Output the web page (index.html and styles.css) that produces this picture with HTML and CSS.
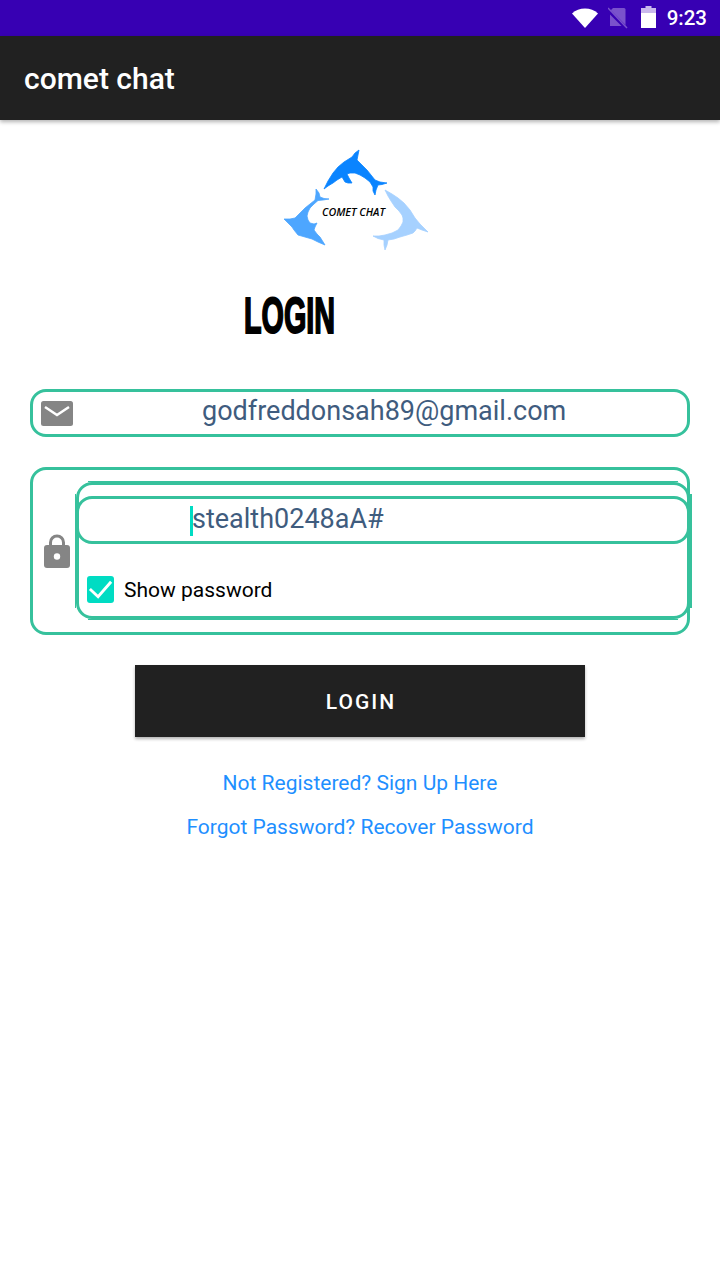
FILE: index.html
```html
<!DOCTYPE html>
<html lang="en">
<head>
    <meta charset="UTF-8">
    <meta name="viewport" content="width=device-width, initial-scale=1.0">
    <title>comet chat</title>
    <link rel="stylesheet" href="styles.css">
</head>
<body>
    <div class="status-bar">
        <svg class="wifi" viewBox="0 0 26 20"><path d="M0 5.5C3.5 2.2 8 .5 13 .5s9.5 1.7 13 5L13 20z"/></svg>
        <svg class="no-sim" viewBox="0 0 20 22"><path d="M5 1h11a1.500 1.500 0 0 1 1.500 1.500V19H2V4z" fill="#7a52cc"/><path d="M-1 2l20 20" stroke="#3700b3" stroke-width="3.500"/><path d="M0 1l19 20" stroke="#7a52cc" stroke-width="1.500"/></svg>
        <svg class="battery" viewBox="0 0 15 22"><path d="M4.500 0h6v2H15v20H0V2h4.500z" fill="#c9b8ec"/><path d="M0 7h15v15H0z" fill="#fff"/></svg>
        <span class="clock">9:23</span>
    </div>

    <header class="app-bar">comet chat</header>

    <main class="content">
        <svg class="logo" viewBox="0 0 170 120">
            <path class="dolphin-top" d="M54 49L58 41 63 33 68 27 74 22 82 17 85 13 89 10 88 15 87 20 92 25 97 30 101 35 105 40 110 42 117 43 112 44.500 108 45 106 50 105 55 103 51 103 47 100 42 95 38 90 35 85 33 80 33 77 34 79 38 82 43 78 43 75 42 72 37 67 40 63 43 58 46z"/>
            <path class="dolphin-left" d="M46 49L49 53 50 57 54 58.500 59 59 53 60 48 60.500 44 64 40 68 38 72 37 76 38 80 40 83 44 84 47 83 45 87 44 90 47 94 50 97 55 105 48 102 42 99 35 97 28 95 24 90 22 87 18 83 14 79 20 79 25 78 30 73 35 68 40 64 45 60 46 54z"/>
            <path class="dolphin-right" d="M115 50L122 54 128 58 134 63 140 70 145 78 150 84 158 92 152 90 147 88 145 91 143 93 137 95 130 97 124 99 118 100 117 105 115 110 114 105 114 100 108 98.500 103 96 109 96 115 95 122 93 128 90 131 86 133 82 133 78 132 75 129 71 125 67 121 61 118 56z"/>
            <text class="logo-text" x="83.500" y="76" textLength="63" lengthAdjust="spacingAndGlyphs" text-anchor="middle">COMET CHAT</text>
        </svg>

        <h1 class="title">LOGIN</h1>

        <div class="field email-field">
            <svg class="field-icon mail" viewBox="0 0 32 25"><rect width="32" height="25" rx="2.5" fill="#858585"/><path d="M4 6l12 8 12-8" fill="none" stroke="#fff" stroke-width="2.5"/></svg>
            <span class="email-value">godfreddonsah89@gmail.com</span>
        </div>

        <div class="field password-field">
            <svg class="field-icon lock" viewBox="0 0 26 34"><path d="M6.500 13V8.500a6.500 6.500 0 0 1 13 0V13" fill="none" stroke="#858585" stroke-width="3"/><rect y="11" width="26" height="23" rx="3" fill="#858585"/><circle cx="13" cy="22.500" r="3.200" fill="#fff"/></svg>
            <div class="password-inner">
                <div class="password-input">
                    <span class="caret"></span><span class="password-value">stealth0248aA#</span>
                </div>
                <label class="show-password">
                    <span class="checkbox"><svg viewBox="0 0 28 28"><path d="M3 13.500l8.500 8L25 6" fill="none" stroke="#fff" stroke-width="3"/></svg></span>
                    <span class="show-label">Show password</span>
                </label>
            </div>
        </div>

        <button class="login-btn">LOGIN</button>

        <a class="link link-first">Not Registered? Sign Up Here</a>
        <a class="link">Forgot Password? Recover Password</a>
    </main>
</body>
</html>
```

FILE: styles.css
```css
* {
    margin: 0;
    padding: 0;
    box-sizing: border-box;
}

body {
    width: 720px;
    height: 1280px;
    overflow: hidden;
    background: #fff;
    font-family: Roboto, sans-serif;
}

.status-bar {
    height: 36px;
    background: #3700b3;
    display: flex;
    align-items: center;
    justify-content: flex-end;
    padding-right: 13px;
    color: #fff;
}

.wifi {
    width: 26px;
    height: 20px;
    fill: #fff;
    margin-right: 10px;
}

.no-sim {
    width: 20px;
    height: 22px;
    margin-right: 13px;
}

.battery {
    width: 15px;
    height: 22px;
    margin: 0 11px 2px 0;
}

.clock {
    font-size: 20.5px;
    font-weight: 500;
}

.app-bar {
    height: 84px;
    background: #212121;
    color: #fff;
    font-size: 30px;
    font-weight: 500;
    padding: 25px 24px 0;
    box-shadow: 0 2px 4px rgba(0, 0, 0, 0.3);
    position: relative;
}

.content {
    display: flex;
    flex-direction: column;
    align-items: center;
}

.logo {
    width: 170px;
    height: 120px;
    margin: 20px 0 0 -10px;
}

.dolphin-top,
.dolphin-left,
.dolphin-right {
    stroke-width: 0.8;
    stroke-linejoin: round;
}

.dolphin-top {
    fill: #0a84ff;
    stroke: #0a84ff;
}

.dolphin-left {
    fill: #4da6ff;
    stroke: #4da6ff;
}

.dolphin-right {
    fill: #a6d1ff;
    stroke: #a6d1ff;
}

.logo-text {
    font-family: "Open Sans", sans-serif;
    font-size: 10px;
    font-weight: 600;
    font-style: italic;
}

.title {
    font-family: "Liberation Sans", sans-serif;
    font-size: 50px;
    line-height: 52px;
    font-weight: 700;
    color: #000;
    align-self: flex-start;
    margin: 30px 0 0 244px;
    transform: scaleX(0.575);
    transform-origin: left center;
    -webkit-text-stroke: 2px #000;
}

.field {
    width: 660px;
    border: 3px solid #36c19c;
    border-radius: 16px;
    display: flex;
    align-items: center;
}

.email-field {
    height: 48px;
    margin-top: 47px;
    padding-left: 8px;
}

.mail {
    width: 32px;
    height: 25px;
    flex: none;
}

.email-value {
    font-size: 27px;
    color: #3f5c7e;
    margin: -4px 0 0 129px;
}

.password-field {
    height: 168px;
    margin-top: 30px;
    padding-left: 11px;
    position: relative;
}

.lock {
    width: 26px;
    height: 34px;
    flex: none;
}

.password-inner {
    position: absolute;
    left: 43px;
    top: 12px;
    width: 614px;
    height: 137px;
    border: 3px solid #36c19c;
    border-radius: 16px;
}

/* stray edges from the stretched field background */
.password-inner::before {
    content: "";
    position: absolute;
    left: 9px;
    right: 9px;
    top: -4px;
    bottom: -4px;
    border-top: 1px solid #36c19c;
    border-bottom: 1px solid #36c19c;
}

.password-inner::after {
    content: "";
    position: absolute;
    left: -4px;
    right: -5px;
    top: 9px;
    bottom: 8px;
    border-left: 1px solid #36c19c;
    border-right: 2px solid #36c19c;
}

.password-input {
    position: absolute;
    left: -3px;
    top: 11px;
    width: 614px;
    height: 48px;
    border: 3px solid #36c19c;
    border-radius: 16px;
    display: flex;
    align-items: center;
    padding-left: 111px;
    background: #fff;
    z-index: 1;
}

.caret {
    width: 3px;
    height: 30px;
    margin-top: 2px;
    background: #00dcc3;
    flex: none;
}

.password-value {
    font-size: 27px;
    color: #3f5c7e;
    margin: -3px 0 0 -1px;
}

.show-password {
    position: absolute;
    left: 8px;
    top: 91px;
    display: flex;
    align-items: center;
    gap: 10px;
    font-size: 21px;
    color: #000;
}

.show-label {
    margin-top: 1px;
}

.checkbox {
    width: 27px;
    height: 27px;
    background: #00dcc3;
    border-radius: 3px;
    display: flex;
}

.login-btn {
    width: 450px;
    height: 72px;
    margin-top: 30px;
    padding: 2px 0 0 2px;
    background: #212121;
    color: #fff;
    border: none;
    font-family: Roboto, sans-serif;
    font-size: 21px;
    font-weight: 500;
    letter-spacing: 2px;
    box-shadow: 0 2px 3px rgba(0, 0, 0, 0.3);
}

.link {
    font-size: 21px;
    line-height: 28px;
    color: #1e8fff;
    margin-top: 16px;
}

.link-first {
    margin-top: 32px;
}
```
